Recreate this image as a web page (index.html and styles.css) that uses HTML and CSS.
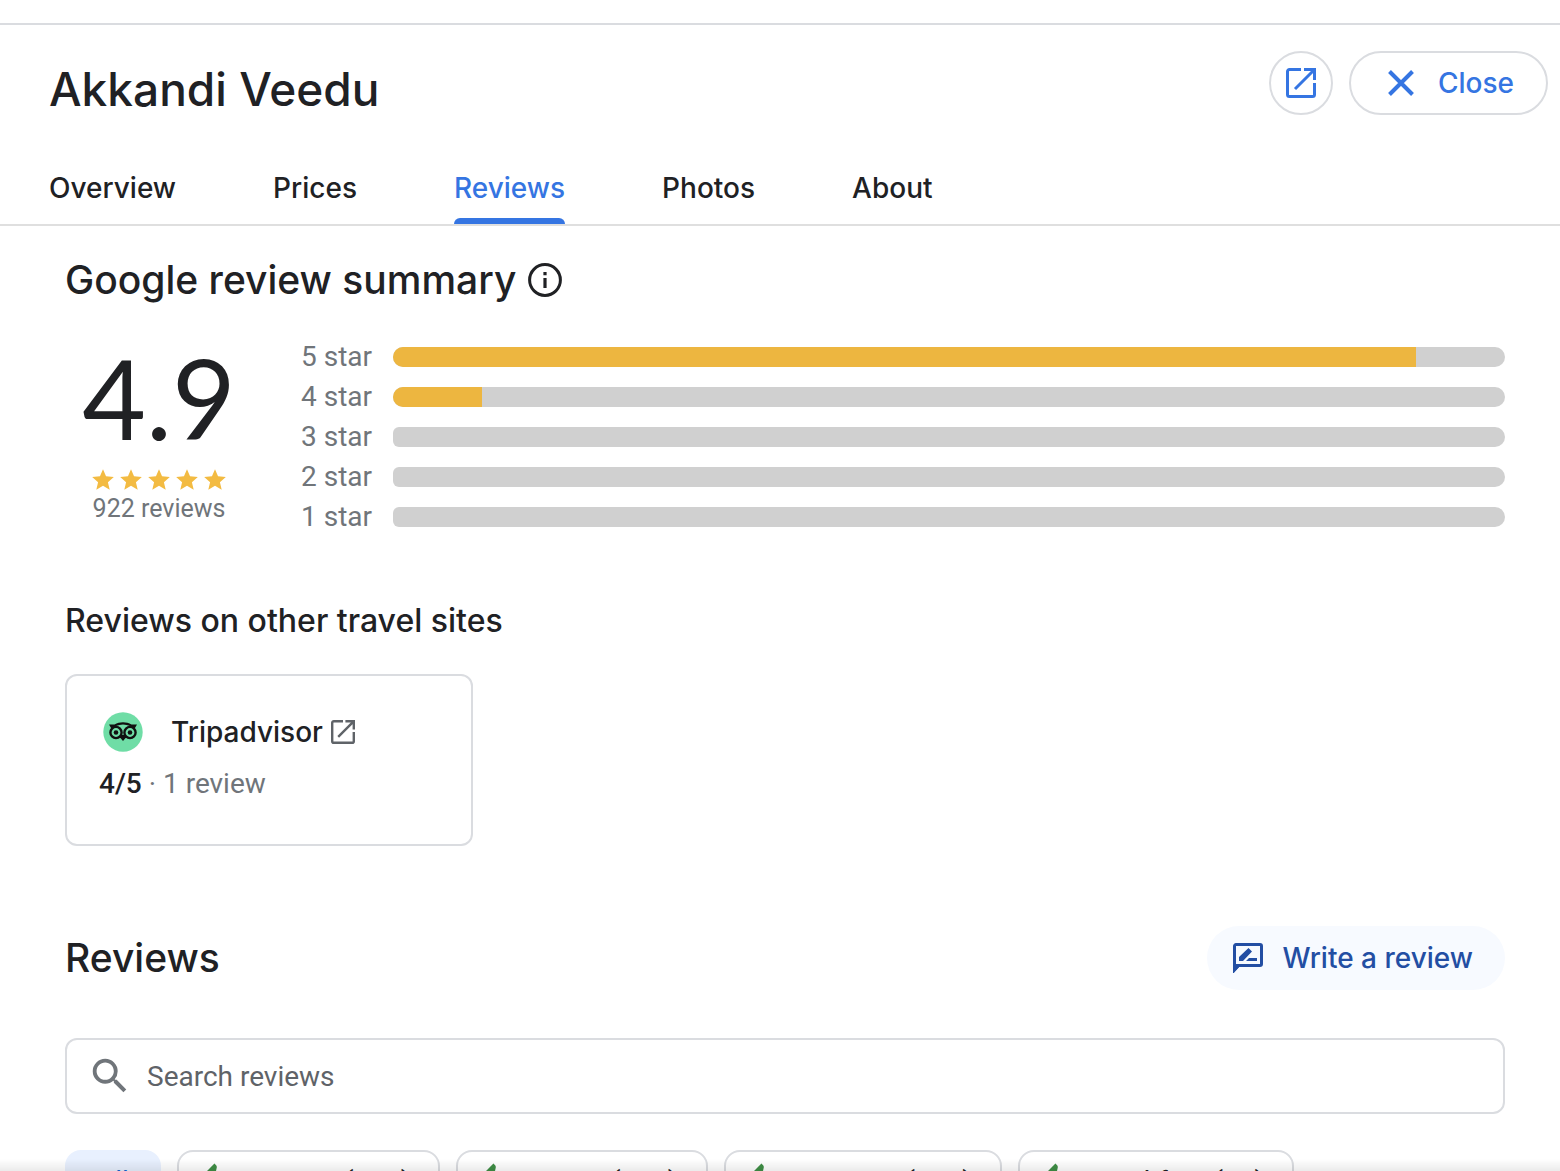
FILE: index.html
```html
<!DOCTYPE html>
<html lang="en">
  <head>
    <meta charset="UTF-8" />
    <meta name="viewport" content="width=device-width, initial-scale=1.0" />
    <title>Akkandi Veedu - Reviews</title>
    <link rel="stylesheet" href="styles.css">
  </head>
  <body>
    <!-- shared icons -->
    <svg class="sprite" width="0" height="0" aria-hidden="true">
      <symbol id="open-in-new" viewBox="0 0 30 30">
        <path d="M15 1.500H3.500a2 2 0 0 0-2 2v23a2 2 0 0 0 2 2h23a2 2 0 0 0 2-2V15M18 1.500h10.500v10.500M28 2 9 21" fill="none" stroke="currentColor" stroke-width="3" />
      </symbol>
      <symbol id="star" viewBox="0 0 24 24">
        <path d="M12 17.270 18.180 21l-1.640-7.030L22 9.240l-7.190-.61L12 2 9.190 8.630 2 9.240l5.460 4.730L5.820 21z" fill="currentColor" />
      </symbol>
      <symbol id="thumb-up" viewBox="0 0 24 24">
        <path d="M1 21h4V9H1v12zm22-11c0-1.100-.9-2-2-2h-6.310l.95-4.570.03-.32c0-.41-.17-.79-.44-1.060L14.170 1 7.590 7.590C7.220 7.950 7 8.450 7 9v10c0 1.100.9 2 2 2h9c.83 0 1.540-.5 1.840-1.220l3.020-7.050c.09-.23.14-.47.14-.73v-2z" fill="currentColor" />
      </symbol>
    </svg>

    <header class="header">
      <div class="title-row">
        <h1>Akkandi Veedu</h1>
        <div class="actions">
          <button class="btn-open" type="button" aria-label="Open in new tab">
            <svg width="30" height="30"><use href="#open-in-new" /></svg>
          </button>
          <button class="btn-close" type="button">
            <svg width="26" height="26" viewBox="0 0 26 26"><path d="M1.500 1.500l23 23M24.500 1.500l-23 23" stroke="currentColor" stroke-width="4" /></svg>
            Close
          </button>
        </div>
      </div>
      <nav class="tabs">
        <a href="#overview">Overview</a>
        <a href="#prices">Prices</a>
        <a href="#reviews" class="active">Reviews</a>
        <a href="#photos">Photos</a>
        <a href="#about">About</a>
      </nav>
    </header>

    <main class="content">
      <section>
        <h2 class="summary-title">
          Google review summary
          <svg width="34" height="34" viewBox="0 0 34 34">
            <circle cx="17" cy="17" r="15.400" fill="none" stroke="currentColor" stroke-width="3" />
            <path d="M17 15v10M17 9v3.200" stroke="currentColor" stroke-width="3.200" />
          </svg>
        </h2>
        <div class="summary">
          <div class="score">
            <div class="score-value">4.9</div>
            <div class="stars">
              <svg><use href="#star" /></svg>
              <svg><use href="#star" /></svg>
              <svg><use href="#star" /></svg>
              <svg><use href="#star" /></svg>
              <svg><use href="#star" /></svg>
            </div>
            <div class="score-count">922 reviews</div>
          </div>
          <div class="histogram">
            <span>5 star</span>
            <div class="bar"><div class="fill" style="width: 92%"></div></div>
            <span>4 star</span>
            <div class="bar"><div class="fill" style="width: 8%"></div></div>
            <span>3 star</span>
            <div class="bar empty"></div>
            <span>2 star</span>
            <div class="bar empty"></div>
            <span>1 star</span>
            <div class="bar empty"></div>
          </div>
        </div>
      </section>

      <section class="other-sites">
        <h3>Reviews on other travel sites</h3>
        <div class="site-card">
          <a class="site-name" href="#tripadvisor">
            <svg width="40" height="40" viewBox="0 0 40 40">
              <circle cx="20" cy="20" r="19.700" fill="#6fdda6" />
              <path d="M6 12.500h5.500c5-3 12-3 17 0H34l-2.600 4.500H8.600z" fill="#111" />
              <path d="M13 14c4.500-2 9.500-2 14 0l-3 2-4 4-4-4z" fill="#6fdda6" />
              <path d="M17 23h6v2.500L20 29l-3-3.500z" fill="#111" />
              <circle cx="13" cy="20.500" r="5.600" fill="#6fdda6" stroke="#111" stroke-width="2.400" />
              <circle cx="27" cy="20.500" r="5.600" fill="#6fdda6" stroke="#111" stroke-width="2.400" />
              <circle cx="13" cy="20.500" r="2.300" fill="#111" />
              <circle cx="27" cy="20.500" r="2.300" fill="#111" />
            </svg>
            <span>Tripadvisor</span>
            <svg class="external" width="24" height="24"><use href="#open-in-new" /></svg>
          </a>
          <p class="site-rating"><b>4/5</b> · 1 review</p>
        </div>
      </section>

      <section class="reviews">
        <div class="reviews-head">
          <h2>Reviews</h2>
          <button class="btn-write" type="button">
            <svg width="30" height="30" viewBox="0 0 30 30">
              <path d="M1.500 27V3a1.500 1.500 0 0 1 1.500-1.500h24A1.500 1.500 0 0 1 28.500 3v18a1.500 1.500 0 0 1-1.500 1.500H5.500z" fill="none" stroke="currentColor" stroke-width="3" />
              <path d="M0 30V21h9zM6 18v-4l9.500-9L19 8.500 10 18zM13 18l3-3h8v3z" fill="currentColor" />
            </svg>
            Write a review
          </button>
        </div>
        <label class="search">
          <svg width="46" height="46" viewBox="0 0 24 24" aria-hidden="true">
            <path d="M15.500 14h-.79l-.28-.27A6.470 6.470 0 0 0 16 9.500 6.500 6.500 0 1 0 9.500 16c1.610 0 3.090-.59 4.230-1.570l.27.28v.79l5 4.990L20.490 19l-4.990-5zm-6 0C7.010 14 5 11.990 5 9.500S7.010 5 9.500 5 14 7.010 14 9.500 11.990 14 9.500 14z" fill="currentColor" />
          </svg>
          <input type="text" placeholder="Search reviews" aria-label="Search reviews">
        </label>
        <div class="chips">
          <button class="chip selected" type="button">All</button>
          <button class="chip" type="button"><svg><use href="#thumb-up" /></svg>Service (124)</button>
          <button class="chip" type="button"><svg><use href="#thumb-up" /></svg>Dining (118)</button>
          <button class="chip" type="button"><svg><use href="#thumb-up" /></svg>Property (102)</button>
          <button class="chip" type="button"><svg><use href="#thumb-up" /></svg>Breakfast (64)</button>
        </div>
      </section>
    </main>
    <div class="bottom-shadow"></div>
  </body>
</html>
```
FILE: styles.css
```css
* {
  box-sizing: border-box;
}
body {
  height: 100vh;
  margin: 0;
  padding-top: 23px;
  overflow: hidden;
  font-family: Roboto, Arial, sans-serif;
  font-size: 28px;
  color: #202124;
  background-color: #fff;
}
h1,
h2,
h3,
p {
  margin: 0;
}
h1,
h2,
h3,
.tabs,
.site-name,
.btn-close,
.btn-write {
  font-family: "Google Sans", Inter, Roboto, sans-serif;
  font-weight: 500;
}
button {
  font-family: inherit;
  font-size: 28px;
  cursor: pointer;
}
svg {
  display: block;
  flex-shrink: 0;
}
.sprite {
  position: absolute;
}

/* header */
.header {
  border-top: 2px solid #dadce0;
  border-bottom: 2px solid #dfdfdf;
}
.title-row {
  display: flex;
  align-items: flex-start;
  justify-content: space-between;
  padding: 26px 12px 0 49px;
}
h1 {
  padding-top: 10px;
  font-size: 46px;
  line-height: 56px;
}
.actions {
  display: flex;
  gap: 16px;
}
.btn-open,
.btn-close {
  display: flex;
  align-items: center;
  justify-content: center;
  height: 64px;
  padding: 0;
  border: 2px solid #dadce0;
  border-radius: 32px;
  background-color: #fff;
  color: #3575e2;
}
.btn-open {
  width: 64px;
}
.btn-close {
  gap: 24px;
  padding: 0 32px 0 37px;
}
.tabs {
  display: flex;
  gap: 97px;
  margin-top: 35px;
  padding-left: 49px;
}
.tabs a {
  position: relative;
  height: 72px;
  line-height: 72px;
  color: #202124;
  text-decoration: none;
}
.tabs .active {
  color: #3575e2;
}
.tabs .active::after {
  content: "";
  position: absolute;
  left: 0;
  right: 0;
  bottom: 0;
  height: 6px;
  border-radius: 6px 6px 0 0;
  background-color: #3575e2;
}

/* review summary */
.content {
  padding: 28px 55px 0 65px;
}
h2 {
  font-size: 39px;
  line-height: 52px;
}
.summary-title {
  display: flex;
  align-items: center;
  gap: 12px;
}
.summary {
  display: flex;
  margin-top: 31px;
}
.score {
  width: 188px;
  text-align: center;
  color: #70757a;
}
.score-value {
  margin-top: 8px;
  font-family: "Google Sans", Lato, sans-serif;
  font-size: 110px;
  line-height: 104px;
  color: #202124;
}
.stars {
  display: flex;
  justify-content: center;
  margin-top: 18px;
  color: #f3bb42;
}
.stars svg {
  width: 28px;
  height: 26px;
}
.score-count {
  font-size: 25px;
  line-height: 32px;
}
.histogram {
  flex: 1;
  display: grid;
  grid-template-columns: auto 1fr;
  align-items: center;
  column-gap: 21px;
  margin-left: 48px;
  line-height: 40px;
  color: #70757a;
}
.bar {
  height: 20px;
  border-radius: 10px;
  background-color: #d0d0d0;
  overflow: hidden;
}
.bar.empty {
  border-radius: 6px 10px 10px 6px;
}
.fill {
  height: 100%;
  background-color: #edb640;
}

/* other travel sites */
.other-sites {
  margin-top: 64px;
}
h3 {
  font-size: 32px;
  line-height: 40px;
}
.site-card {
  width: 408px;
  height: 172px;
  margin-top: 33px;
  padding: 30px 32px;
  border: 2px solid #dadce0;
  border-radius: 12px;
}
.site-name {
  display: flex;
  align-items: center;
  padding-left: 4px;
  line-height: 52px;
  color: #202124;
  text-decoration: none;
}
.site-name span {
  margin: 0 8px 0 28px;
}
.external {
  color: #5f6368;
}
.site-rating {
  line-height: 52px;
  color: #70757a;
}
.site-rating b {
  font-weight: 500;
  color: #202124;
}

/* reviews list */
.reviews {
  margin-top: 80px;
}
.reviews-head {
  display: flex;
  align-items: center;
  justify-content: space-between;
}
.btn-write {
  display: flex;
  align-items: center;
  gap: 20px;
  height: 64px;
  padding: 0 32px 0 26px;
  border: none;
  border-radius: 32px;
  background-color: #f7faff;
  color: #234ea3;
}
.search {
  display: flex;
  align-items: center;
  gap: 14px;
  height: 76px;
  margin-top: 48px;
  padding: 0 20px;
  border: 2px solid #dadce0;
  border-radius: 12px;
  color: #70757a;
}
.search input {
  flex: 1;
  padding: 0;
  border: none;
  outline: none;
  font-family: inherit;
  font-size: 28px;
}
.search input::placeholder {
  color: #5f6368;
}
.chips {
  display: flex;
  gap: 16px;
  margin-top: 36px;
}
.chip {
  display: flex;
  align-items: center;
  gap: 18px;
  height: 62px;
  padding: 0 28px 0 13px;
  border: 2px solid #dadce0;
  border-radius: 16px;
  background-color: #fff;
  color: #202124;
  white-space: nowrap;
}
.chip.selected {
  padding: 0 30px;
  border-color: #e8f0fe;
  background-color: #e8f0fe;
  color: #1967d2;
}
.chip svg {
  width: 38px;
  height: 38px;
  margin-right: -2px;
  color: #3f8f46;
}
.bottom-shadow {
  position: fixed;
  left: 0;
  right: 0;
  bottom: 0;
  height: 12px;
  background: linear-gradient(rgba(0, 0, 0, 0), rgba(0, 0, 0, 0.08));
}
```
